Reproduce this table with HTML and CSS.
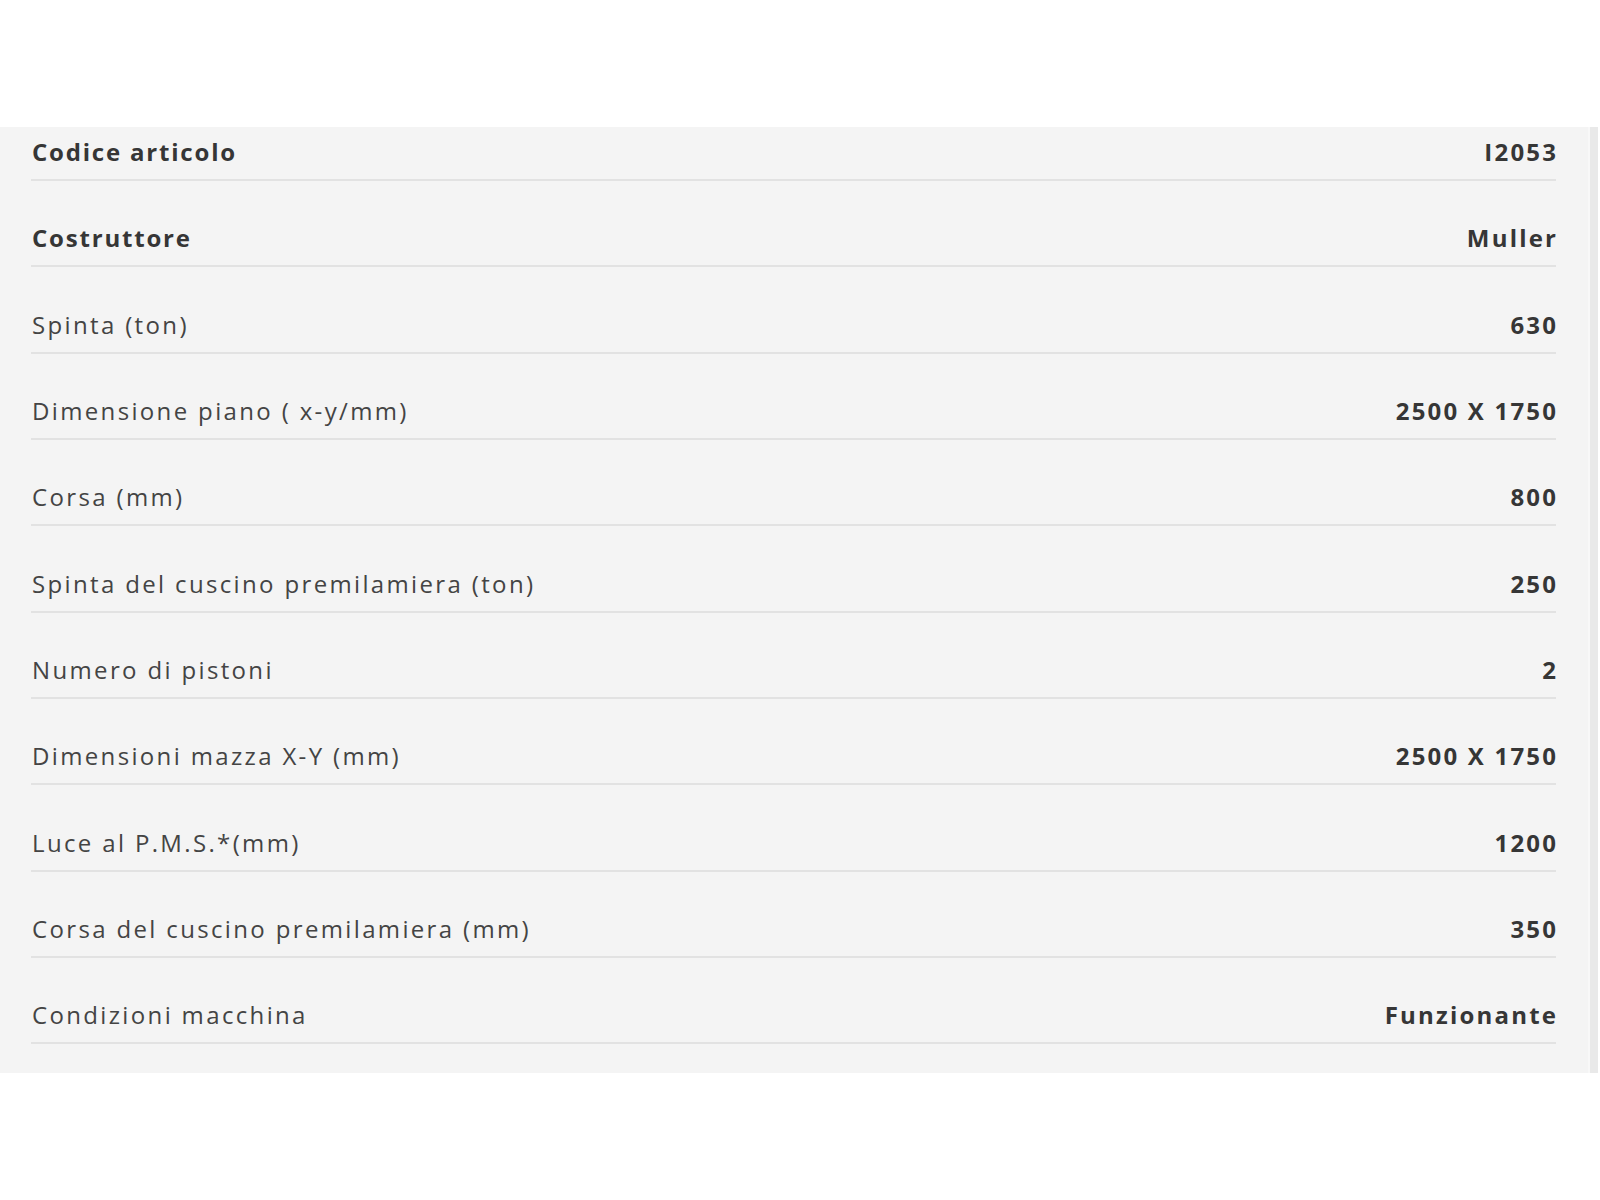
FILE: index.html
```html
<!DOCTYPE html>
<html lang="it">
<head>
<meta charset="utf-8">
<title>Scheda tecnica</title>
<link rel="stylesheet" href="styles.css">
</head>
<body>
<div class="panel">
  <div class="specs">
    <div class="row"><span class="label strong">Codice articolo</span><span class="value">I2053</span></div>
    <div class="row"><span class="label strong">Costruttore</span><span class="value">Muller</span></div>
    <div class="row"><span class="label">Spinta (ton)</span><span class="value">630</span></div>
    <div class="row"><span class="label">Dimensione piano ( x-y/mm)</span><span class="value">2500 X 1750</span></div>
    <div class="row"><span class="label">Corsa (mm)</span><span class="value">800</span></div>
    <div class="row"><span class="label">Spinta del cuscino premilamiera (ton)</span><span class="value">250</span></div>
    <div class="row"><span class="label">Numero di pistoni</span><span class="value">2</span></div>
    <div class="row"><span class="label">Dimensioni mazza X-Y (mm)</span><span class="value">2500 X 1750</span></div>
    <div class="row"><span class="label">Luce al P.M.S.*(mm)</span><span class="value">1200</span></div>
    <div class="row"><span class="label">Corsa del cuscino premilamiera (mm)</span><span class="value">350</span></div>
    <div class="row"><span class="label">Condizioni macchina</span><span class="value">Funzionante</span></div>
  </div>
  <div class="edge"></div>
</div>
</body>
</html>
```
FILE: styles.css
```css
html, body {
  margin: 0;
  padding: 0;
  background: #ffffff;
}
body {
  font-family: "Open Sans", "Liberation Sans", sans-serif;
  color: #3d3d3d;
}
.panel {
  margin-top: 127px;
  width: 1598px;
  display: flex;
  background: #f4f4f4;
}
.specs {
  flex: 1;
  padding: 10px 32px 29px 31px;
  display: flex;
  flex-direction: column;
  gap: 42.33px;
}
.edge {
  box-sizing: border-box;
  width: 10px;
  background: #e9e9e9;
  border-left: 2px solid #f8f8f8;
}
.row {
  display: flex;
  justify-content: space-between;
  align-items: center;
  line-height: 30px;
  padding: 0 0 12px 1px;
  border-bottom: 2px solid #e2e2e2;
  font-size: 24px;
}
.label {
  font-weight: 400;
  color: #444444;
  letter-spacing: 2.35px;
}
.label.strong {
  font-weight: 700;
  color: #363636;
  letter-spacing: 1.8px;
}
.value {
  font-weight: 700;
  color: #363636;
  letter-spacing: 2.2px;
  margin-right: -2.2px;
}
```
